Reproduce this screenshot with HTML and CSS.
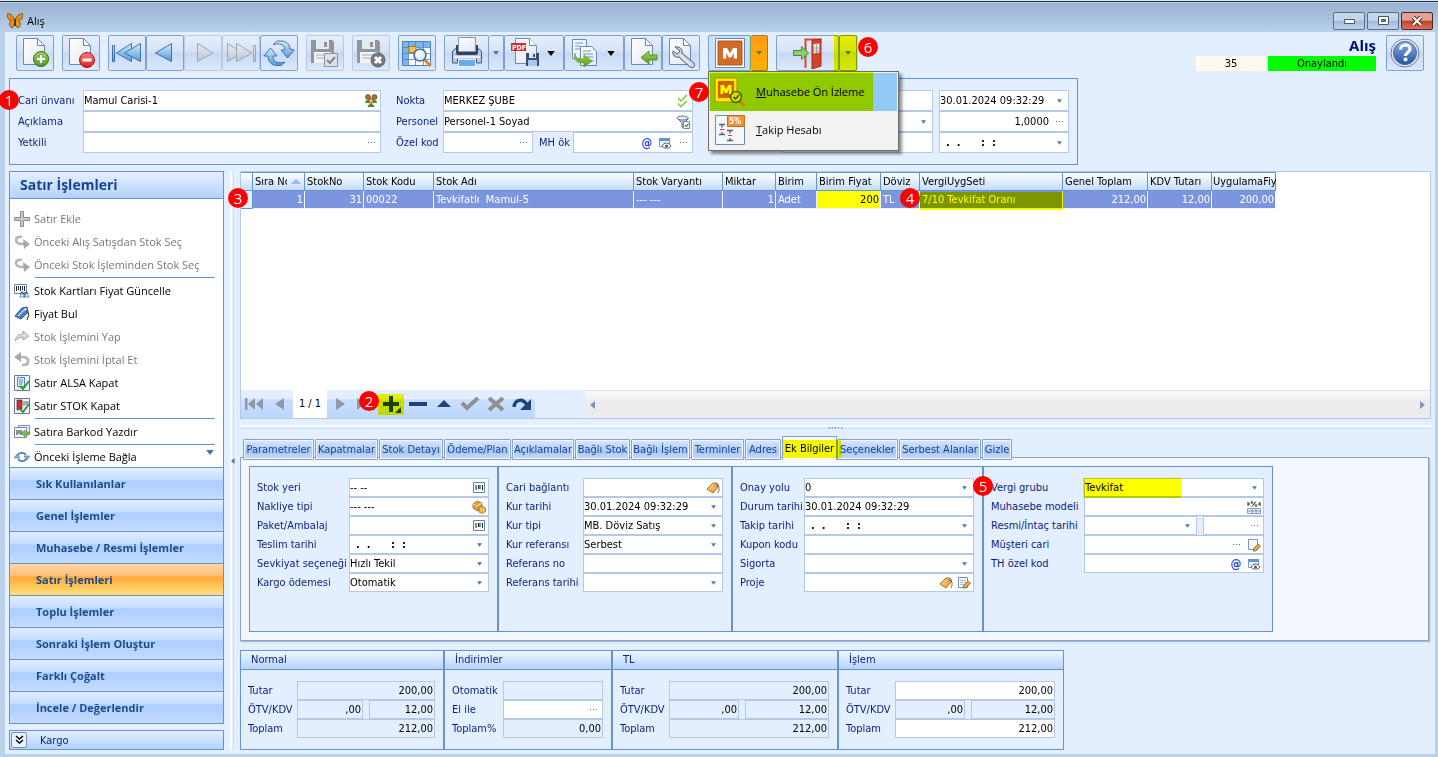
FILE: index.html
```html
<!DOCTYPE html>
<html lang="tr">
<head>
<meta charset="utf-8">
<title>Alış</title>
<link rel="stylesheet" href="styles.css">
</head>
<body>
<svg class="defs" aria-hidden="true">
  <defs>
    <linearGradient id="gBlue" x1="0" y1="0" x2="0" y2="1"><stop offset="0" stop-color="#d3ecfa"/><stop offset="1" stop-color="#4f9bd6"/></linearGradient>
    <linearGradient id="gGray" x1="0" y1="0" x2="0" y2="1"><stop offset="0" stop-color="#e8edf3"/><stop offset="1" stop-color="#bcc6d2"/></linearGradient>
    <linearGradient id="gPage" x1="0" y1="0" x2="1" y2="1"><stop offset="0" stop-color="#ffffff"/><stop offset="1" stop-color="#dfe7f3"/></linearGradient>
    <linearGradient id="gGreen" x1="0" y1="0" x2="0" y2="1"><stop offset="0" stop-color="#a6d85a"/><stop offset="1" stop-color="#4d9a1d"/></linearGradient>
    <linearGradient id="gRed" x1="0" y1="0" x2="0" y2="1"><stop offset="0" stop-color="#ff8080"/><stop offset="1" stop-color="#dd1a1a"/></linearGradient>
    <linearGradient id="gHelp" x1="0" y1="0" x2="0" y2="1"><stop offset="0" stop-color="#8eb2e6"/><stop offset="1" stop-color="#2350a0"/></linearGradient>
    <linearGradient id="gTag" x1="0" y1="0" x2="1" y2="1"><stop offset="0" stop-color="#ffe2a0"/><stop offset="1" stop-color="#e08a20"/></linearGradient>
    <symbol id="page" viewBox="0 0 32 32"><path d="M4.500 1.500h14l7 7v19h-21z" fill="url(#gPage)" stroke="#6d88b4"/><path d="M18.500 1.500v7h7z" fill="#fff" stroke="#6d88b4"/></symbol>
    <symbol id="newdoc" viewBox="0 0 32 32"><use href="#page"/><circle cx="22" cy="22" r="7.500" fill="url(#gGreen)" stroke="#2f6d12"/><path d="M20.500 17.500h3v3h3v3h-3v3h-3v-3h-3v-3h3z" fill="#fff" stroke="#3e8018" stroke-width=".5"/></symbol>
    <symbol id="deldoc" viewBox="0 0 32 32"><use href="#page"/><circle cx="22" cy="23" r="7.500" fill="url(#gRed)" stroke="#b01818"/><path d="M17.500 21.500h9v3h-9z" fill="#fff"/></symbol>
    <symbol id="first" viewBox="0 0 32 32"><g fill="url(#gBlue)" stroke="#3f6fb0"><path d="M1.500 8.500h2v16h-2z"/><path d="M20.500 6.500v18L5.500 16z"/><path d="M29.500 6.500v18L13.500 16z"/></g></symbol>
    <symbol id="prev" viewBox="0 0 32 32"><path d="M22.500 6.500v18L6.500 16z" fill="url(#gBlue)" stroke="#3f6fb0"/></symbol>
    <symbol id="next" viewBox="0 0 32 32"><path d="M10.500 6.500v18L26 16z" fill="url(#gGray)" stroke="#9aa7b8"/></symbol>
    <symbol id="last" viewBox="0 0 32 32"><g fill="url(#gGray)" stroke="#9aa7b8"><path d="M28.500 8.500h2v16h-2z"/><path d="M2.500 6.500v18L18 16z"/><path d="M11.500 6.500v18L27 16z"/></g></symbol>
    <symbol id="refresh" viewBox="0 0 32 32"><g fill="url(#gBlue)" stroke="#2f69ab" stroke-width=".9"><path d="M5 19C5 25 9 28.500 14 28.500l4 0 4-3.500c-6 1.500-12 1-12-6h4L7.500 11 .8 19z"/><path d="M27 12C27 7 23 4 18 4h-4l-4 3.500c6-1.500 12-.5 12 5.500h-4l6.500 8L31.200 13z"/></g></symbol>
    <symbol id="floppy" viewBox="0 0 32 32"><path d="M2 3h21l2 2v21H2z" fill="#8f959c"/><path d="M7 3h13v9H7z" fill="#e6e9ed"/><path d="M15 5h3v5h-3z" fill="#8f959c"/><path d="M5 15h17v11H5z" fill="#f1f3f5"/><path d="M7 18h13M7 21h13" stroke="#a9afb6"/></symbol>
    <symbol id="savecheck" viewBox="0 0 32 32"><use href="#floppy"/><path d="M15.500 16.500h13v13h-13z" fill="#dfe1e4" stroke="#8d939a"/><path d="M18 23l3 3 5-6" fill="none" stroke="#80868d" stroke-width="2"/></symbol>
    <symbol id="savex" viewBox="0 0 32 32"><use href="#floppy"/><circle cx="23" cy="23" r="7" fill="#73787e" stroke="#62676d"/><path d="M20 20l6 6m0-6l-6 6" stroke="#fff" stroke-width="3"/></symbol>
    <symbol id="tablezoom" viewBox="0 0 32 32"><path d="M1.500 4.500h28v24h-28z" fill="#fff" stroke="#4c80bb"/><path d="M2 5h27v5H2zM2 5h5v23H2z" fill="#79b7e6"/><path d="M1.500 10.500h28M1.500 16.500h28M1.500 22.500h28M7.500 4.500v24M14.500 4.500v24M22.500 4.500v24" stroke="#4c80bb" stroke-width=".8"/><path d="M8 9.500h7v6H8z" fill="#ffc04e" stroke="#b97a20"/><path d="M23.500 22.500l6 6.500" stroke="#d6862f" stroke-width="3"/><circle cx="19" cy="18" r="6" fill="#d8effd" stroke="#3f6fae" stroke-width="1.600"/><circle cx="18" cy="17" r="3" fill="#fff"/></symbol>
    <symbol id="printer" viewBox="0 0 32 32"><path d="M1.500 14l4-3h21l4 3v12h-29z" fill="#b9cbe4" stroke="#42597f"/><path d="M5 8h22v8c0 2-2 2-3 2H8c-1 0-3 0-3-2z" fill="#33435f"/><path d="M7.500.500h17v14h-17z" fill="url(#gPage)" stroke="#8096ba"/><path d="M3 19h26v2H3z" fill="#e7effa"/><path d="M6 22h20v3H6z" fill="#3c4c68"/><path d="M7.500 22.500h17v7h-17z" fill="#63aee8" stroke="#e8f2fb"/></symbol>
    <symbol id="pdf" viewBox="0 0 32 32"><path d="M7.500 1.500h14l7 7v18h-21z" fill="url(#gPage)" stroke="#6d88b4"/><path d="M21.500 1.500v7h7" fill="#fff" stroke="#6d88b4"/><path d="M3 6h15v8H3z" fill="#d22b2b"/><text x="4" y="12.500" class="pdf-word">PDF</text><path d="M18 16h13v13H18z" fill="#3b4d70"/><path d="M21 16h7v5h-7z" fill="#dbe6f5"/><path d="M25 17h2v3h-2z" fill="#3b4d70"/><path d="M20 23h9v6h-9z" fill="#a8c9ee"/></symbol>
    <symbol id="copy" viewBox="0 0 32 32"><path d="M4.500 2.500h14v19h-14z" fill="url(#gPage)" stroke="#6d88b4"/><path d="M12.500 9.500h11l5 5v14h-16z" fill="url(#gPage)" stroke="#6d88b4"/><path d="M7 6h8M7 9h5M7 12h5M15 14h8M15 17h10M15 20h10M22 24h4" stroke="#6d93cc"/><path d="M7 16c0 5 3 6 9 6v-4l8 6-8 6v-4C9 26 5 23 7 16z" fill="url(#gGreen)" stroke="#5b9a20" stroke-width=".7"/></symbol>
    <symbol id="pageleft" viewBox="0 0 32 32"><use href="#page"/><path d="M14 20.500l8-6.500v4h8v5h-8v4z" fill="url(#gGreen)" stroke="#55942c"/></symbol>
    <symbol id="pagewrench" viewBox="0 0 32 32"><use href="#page"/><path d="M10 10c4-1 8 2 7 6l12 10c2 3-1 6-4 4L14 20c-4 1-7-2-6-6l4 3 3-3z" fill="#c8d1df" stroke="#4e5e7b"/><path d="M15 18l11 10" stroke="#eef2f8" stroke-width="1.500"/></symbol>
    <symbol id="mbig" viewBox="0 0 32 32"><path d="M1.500 1.500h29v29h-29z" fill="#fff" stroke="#6f83ac"/><path d="M4 4h24v24H4z" fill="#d26a28" stroke="#b5551c"/><path d="M9 21.500V11h4l3 5.500 3-5.500h4v10.500h-3.200V16l-2.600 4.500h-2.400L12.200 16v5.500z" fill="#fff"/></symbol>
    <symbol id="door" viewBox="0 0 32 32"><path d="M13.500 31V2.500h16" fill="none" stroke="#d94b28" stroke-width="2"/><path d="M20 3l9-1v27l-9 3z" fill="#cf4526" stroke="#a43018"/><path d="M21.500 7l6-.5v9l-6 1z" fill="#e8eef4"/><path d="M24.500 7v9M21.500 11h6M21.500 14h6" stroke="#8c8f95" stroke-width=".8"/><path d="M1.500 13.500h8v-4l7 6.500-7 6.500v-4h-8z" fill="#8fcf6f" stroke="#3e8a3a"/></symbol>
    <symbol id="help" viewBox="0 0 32 32"><circle cx="16" cy="16" r="14" fill="#e4e9f2" stroke="#6d7fa8"/><circle cx="16" cy="16" r="11.500" fill="url(#gHelp)" stroke="#4468a5"/><path d="M11.500 12.500c0-6 9.500-6 9.500-.5 0 3.500-4.500 3.500-4.500 7" fill="none" stroke="#fff" stroke-width="3"/><circle cx="16.500" cy="22.500" r="2" fill="#fff"/></symbol>
    <symbol id="mzoom" viewBox="0 0 32 32"><path d="M1 2h22v24H1z" fill="#ffe86a" stroke="#a78a4a"/><path d="M4 5h16v17H4z" fill="#d0641c"/><path d="M6.500 18V9h3.200l2.300 4.500L14.300 9h3.200v9H15v-4.500L13 17h-2l-2-3.500V18z" fill="#fff"/><path d="M25 25l5.500 5" stroke="#c9802a" stroke-width="3"/><circle cx="22" cy="21" r="5.500" fill="#cfe0ec" stroke="#55606b" stroke-width="1.500"/><path d="M19.500 21l2 2 3.500-4" fill="none" stroke="#3c5058" stroke-width="1.500"/></symbol>
    <symbol id="follow" viewBox="0 0 32 32"><path d="M1.500 1.500h29v29h-29z" fill="#f4f7fc" stroke="#7189b4"/><path d="M13.500 1.500h17v11h-17z" fill="#f09236" stroke="#cc6f18"/><text x="15" y="10" class="pct-word">5%</text><path d="M5 10.500h6M5 20.500h6M8 10.500v3M8 18v2M13 16.500h6M13 26.500h6M16 16.500v3M16 24v2" stroke="#555f74" stroke-width="1.300"/><path d="M6 15.500h4M14 21.500h4" stroke="#d33"/></symbol>
    <symbol id="butterfly" viewBox="0 0 16 16"><path d="M8 7C6 2 2 0 0 1c0 4 2 6 4 7-2 2-2 5 1 7 2-1 3-4 3-6 0 2 1 5 3 6 3-2 3-5 1-7 2-1 4-3 4-7-2-1-6 1-8 6z" fill="#f0921c" stroke="#6b3a08" stroke-width=".8"/><path d="M8 6v7" stroke="#3a2208" stroke-width="1.500"/><path d="M3 4l3 4M13 4l-3 4" stroke="#a85a0c" stroke-width=".7"/></symbol>
    <symbol id="caret" viewBox="0 0 6 4"><path d="M0 0h6L3 4z" fill="currentColor"/></symbol>
    <symbol id="dots" viewBox="0 0 9 3"><path d="M1 1h1v1H1zM4 1h1v1H4zM7 1h1v1H7z" fill="#4872ac"/></symbol>
    <symbol id="people" viewBox="0 0 14 14"><circle cx="4" cy="3" r="2.500" fill="#a8703a" stroke="#5a3413" stroke-width=".6"/><circle cx="10.500" cy="3" r="2.500" fill="#a8703a" stroke="#5a3413" stroke-width=".6"/><path d="M1 9c0-4 6-4 6-1 0-3 6-3 6 1z" fill="#3d9a34"/><circle cx="7" cy="7" r="2.500" fill="#e0b070" stroke="#5a3413" stroke-width=".6"/><path d="M3.500 13c0-4 7-4 7 0z" fill="#3d9a34"/><path d="M6 10h2v2H6z" fill="#d33"/></symbol>
    <symbol id="dblcheck" viewBox="0 0 14 14"><path d="M2 4l3 3 6-6M2 9.500l3 3 6-5.500" fill="none" stroke="#9ccb5e" stroke-width="1.800"/></symbol>
    <symbol id="filtercheck" viewBox="0 0 14 14"><path d="M1 3l5 5v4l2 1V8l5-5" fill="#c3cbd6" stroke="#6b7585"/><ellipse cx="6.500" cy="3" rx="5.500" ry="2" fill="#e6eaf0" stroke="#6b7585"/><path d="M7.500 6.500h6v7h-6z" fill="#fff" stroke="#6a87b5"/><path d="M9 10l1.500 1.500L12.500 8.500" fill="none" stroke="#3c9a28" stroke-width="1.300"/></symbol>
    <symbol id="preview" viewBox="0 0 14 14"><path d="M1.500 2.500h10v8h-10z" fill="#eef4fb" stroke="#7c9cc8"/><path d="M1 2h11v3H1z" fill="#5e97cf"/><path d="M4 10c2-4 7-4 9 0-2 3-7 3-9 0z" fill="#fff" stroke="#56606e"/><circle cx="8.500" cy="10" r="1.600" fill="#56606e"/></symbol>
    <symbol id="barcode" viewBox="0 0 14 14"><path d="M1.500 1.500h11v10h-11z" fill="#fff" stroke="#5d86c0"/><path d="M4 4v5M6.500 4v4M8 4v4M10.500 4v5" stroke="#222b3c" stroke-width="1.100"/></symbol>
    <symbol id="boxes" viewBox="0 0 14 14"><path d="M1 4l4-3 5 2v6l-5 2-4-3z" fill="#dda03e" stroke="#8f5d14" stroke-width=".7"/><path d="M1 4l4 2 5-3" fill="none" stroke="#fbe0a4"/><path d="M7 8l3-2 3.500 2v3.500L10 13.500 7 12z" fill="#f0bc60" stroke="#8f5d14" stroke-width=".7"/></symbol>
    <symbol id="tag" viewBox="0 0 14 14"><path d="M1 8l6-6 4 0 2 3-6 7z" fill="url(#gTag)" stroke="#b2741f"/><circle cx="9.500" cy="4.500" r="1.200" fill="#fff" stroke="#7a4f14" stroke-width=".6"/><path d="M10 4c3 0 4 4 2 8" fill="none" stroke="#4a4540" stroke-width=".8"/></symbol>
    <symbol id="editdoc" viewBox="0 0 14 14"><path d="M1.500 1.500h9v10h-9z" fill="#f7faff" stroke="#7992bd"/><path d="M3 4.500h6M3 6.500h6M3 8.500h4" stroke="#8db0de" stroke-width=".8"/><path d="M6 12l1-3 4-4 2.500 2L9 12z" fill="#eba83f" stroke="#80521b" stroke-width=".7"/></symbol>
    <symbol id="editpage" viewBox="0 0 14 14"><path d="M1.500 1.500h9v10h-9z" fill="#f7faff" stroke="#7992bd"/><path d="M6 13l1-3 4-4 2.500 2L9 13z" fill="#eba83f" stroke="#80521b" stroke-width=".7"/></symbol>
    <symbol id="pcttable" viewBox="0 0 14 14"><path d="M1 2v4M13 2v4M1 4h2M11 4h2M5 6.500l4-5" stroke="#222" stroke-width="1"/><circle cx="5" cy="2.500" r="1" fill="none" stroke="#222" stroke-width=".8"/><circle cx="9" cy="5.500" r="1" fill="none" stroke="#222" stroke-width=".8"/><path d="M.5 8.500h13v5H.5zM.5 11h13M5 8.500v5M9 8.500v5" fill="#e7ebf6" stroke="#7f8bb5" stroke-width=".8"/></symbol>
    <symbol id="plusg" viewBox="0 0 16 16"><path d="M6.500.500h3v6h6v3h-6v6h-3v-6h-6v-3h6z" fill="#c9c9c9" stroke="#8f8f8f"/></symbol>
    <symbol id="backg" viewBox="0 0 16 16"><path d="M8 3C4 2 2 4 2 6s2 4 6 4h3" fill="none" stroke="#b5b5b5" stroke-width="2.600"/><path d="M9 5l7 5-6 5z" fill="#a9a9a9"/></symbol>
    <symbol id="fwdg" viewBox="0 0 16 16"><path d="M1 12c1-5 4-7 8-7V2l6 5-6 4V8c-3 0-5 1-8 4z" fill="#dedede" stroke="#9d9d9d" stroke-width=".9"/></symbol>
    <symbol id="undog" viewBox="0 0 16 16"><path d="M4 5h6c6 1 5 8 0 8H8" fill="none" stroke="#b5b5b5" stroke-width="2.600"/><path d="M7 0v10L0 5z" fill="#a9a9a9"/></symbol>
    <symbol id="barfind" viewBox="0 0 16 16"><path d="M.5 1.500h12v9H.5z" fill="#fff" stroke="#6d86b3"/><path d="M2.500 3v5M4.500 3v4M6.500 3v5M8.500 3v4M10.500 3v5" stroke="#1d2433"/><path d="M6 14l1-5h2l1 2 1-2h2l2 5z" fill="#5a7fbb" stroke="#3c588c" stroke-width=".7"/><circle cx="8" cy="12.500" r="1.600" fill="#cfe3fa"/><circle cx="13" cy="12.500" r="1.600" fill="#cfe3fa"/></symbol>
    <symbol id="tagblue" viewBox="0 0 16 16"><path d="M1 10l7-8 5-1 1 5-7 7z" fill="#4b84c6" stroke="#234f8f"/><path d="M4 10l6-6" stroke="#b9d6f4" stroke-width="1.500"/><circle cx="11.500" cy="3.500" r="1.200" fill="#fff"/><path d="M12 4c3 2 3 6 1 10" fill="none" stroke="#7a4a22" stroke-width="1.300"/></symbol>
    <symbol id="docok" viewBox="0 0 16 16"><path d="M.5.500h15v15H.5z" fill="#eef4fb" stroke="#6d7a93"/><path d="M3.500 2.500h7v9h-7z" fill="#dceafa" stroke="#5585c2"/><path d="M5 5h4M5 7h4M5 9h3" stroke="#5585c2"/><path d="M6 11l3 3 6-8" fill="none" stroke="#2f9e34" stroke-width="2"/></symbol>
    <symbol id="stockok" viewBox="0 0 16 16"><path d="M.5.500h15v15H.5z" fill="#eef4fb" stroke="#6d7a93"/><path d="M3 2h5v9l-5 1z" fill="#c23434" stroke="#7d1717" stroke-width=".7"/><path d="M10 3v5M12 3v4M14 3v3" stroke="#5a6785" stroke-width="1"/><path d="M6 11l3 3 6-8" fill="none" stroke="#2f9e34" stroke-width="2"/></symbol>
    <symbol id="barprint" viewBox="0 0 16 16"><path d="M4.500 1.500h11v9h-11z" fill="#e3ecf8" stroke="#7a93be"/><path d="M.5 3.500h12v10H.5z" fill="#fff" stroke="#6d86b3"/><path d="M3 6v5M5 6v4M7 6v5" stroke="#1d2433"/><path d="M7 9l4-3v2h4v3h-4v2z" fill="#7fbf42" stroke="#4d8a24" stroke-width=".6"/></symbol>
    <symbol id="sync" viewBox="0 0 16 16"><g fill="none" stroke="#5a86ad" stroke-width="2"><path d="M3 9c0-5 6-7 9-3"/><path d="M13 7c0 5-6 7-9 3"/></g><path d="M0 9h6L3 5zM10 7h6l-3 4z" fill="#7fb2da" stroke="#4b7aa5" stroke-width=".6"/></symbol>
    <symbol id="nfirst" viewBox="0 0 20 20"><path d="M1 4h2.500v12H1zM11 4v12l-7-6zM19 4v12l-7-6z" fill="#8e98a6"/></symbol>
    <symbol id="nprev" viewBox="0 0 20 20"><path d="M14 4v12l-9-6z" fill="#8e98a6"/></symbol>
    <symbol id="nnext" viewBox="0 0 20 20"><path d="M6 4v12l9-6z" fill="#8e98a6"/></symbol>
    <symbol id="nlast" viewBox="0 0 20 20"><path d="M16 4h3v12h-3zM1 4v12l7-6zM8 4v12l7-6z" fill="#8e98a6"/></symbol>
    <symbol id="nplus" viewBox="0 0 20 20"><path d="M7 2h4v6h6v4h-6v6H7v-6H1V8h6z" fill="#1c4280"/><path d="M19 13v6h-6z" fill="#1c4280"/></symbol>
    <symbol id="nminus" viewBox="0 0 20 20"><path d="M1 8h18v4H1z" fill="#1c4280"/></symbol>
    <symbol id="nup" viewBox="0 0 20 20"><path d="M3 13l7-7 7 7z" fill="#1c4280"/></symbol>
    <symbol id="ncheck" viewBox="0 0 20 20"><path d="M2 9l5 5L18 4" fill="none" stroke="#909090" stroke-width="4"/></symbol>
    <symbol id="nx" viewBox="0 0 20 20"><path d="M3 4l14 12M17 4L3 16" stroke="#909090" stroke-width="4"/></symbol>
    <symbol id="nredo" viewBox="0 0 20 20"><path d="M2 13C3 5 11 4 15 11" fill="none" stroke="#1c4280" stroke-width="3.500"/><path d="M19 5v11H8z" fill="#1c4280"/></symbol>
  </defs>
</svg>

<div class="window">
  <header class="titlebar">
    <svg class="i16"><use href="#butterfly"/></svg>
    <h1 class="title">Alış</h1>
    <div class="winbtns">
      <button class="winbtn" aria-label="Küçült"><svg width="11" height="10"><path d="M.5 3.500h10v4H.5z" fill="#fff" stroke="#4b5462"/></svg></button>
      <button class="winbtn" aria-label="Büyüt"><svg width="11" height="10"><path d="M.5.500h10v8H.5z" fill="#fff" stroke="#4b5462"/><path d="M3.500 3.500h4v2h-4z" fill="#7c95b0" stroke="#4b5462"/></svg></button>
      <button class="winbtn close" aria-label="Kapat"><svg width="12" height="10"><path d="M2 1l8 8M10 1L2 9" stroke="#5b2320" stroke-width="4"/><path d="M2 1l8 8M10 1L2 9" stroke="#fff" stroke-width="2"/></svg></button>
    </div>
  </header>

  <div class="content">
    <div class="toolbar">
      <button class="tb" aria-label="Yeni"><svg><use href="#newdoc"/></svg></button>
      <button class="tb" aria-label="Sil"><svg><use href="#deldoc"/></svg></button>
      <div class="tbgroup">
        <button class="tb" aria-label="İlk"><svg><use href="#first"/></svg></button>
        <button class="tb" aria-label="Önceki"><svg><use href="#prev"/></svg></button>
        <button class="tb off" aria-label="Sonraki"><svg><use href="#next"/></svg></button>
        <button class="tb off" aria-label="Son"><svg><use href="#last"/></svg></button>
        <button class="tb" aria-label="Yenile"><svg><use href="#refresh"/></svg></button>
      </div>
      <button class="tb off" aria-label="Kaydet"><svg><use href="#savecheck"/></svg></button>
      <button class="tb off" aria-label="Vazgeç"><svg><use href="#savex"/></svg></button>
      <button class="tb" aria-label="Liste"><svg><use href="#tablezoom"/></svg></button>
      <div class="tbgroup">
        <button class="tb wide-print" aria-label="Yazdır"><svg><use href="#printer"/></svg></button>
        <button class="tb split blue" aria-label="Yazdır seçenekleri"><svg><use href="#caret"/></svg></button>
        <button class="tb drop" aria-label="PDF kaydet"><svg><use href="#pdf"/></svg><svg class="caret"><use href="#caret"/></svg></button>
        <button class="tb drop" aria-label="Kopyala"><svg><use href="#copy"/></svg><svg class="caret"><use href="#caret"/></svg></button>
        <button class="tb" aria-label="İçeri al"><svg><use href="#pageleft"/></svg></button>
        <button class="tb" aria-label="Ayarlar"><svg><use href="#pagewrench"/></svg></button>
      </div>
      <div class="tbgroup anchor">
        <button class="tb wide-m" aria-label="Muhasebe"><svg><use href="#mbig"/></svg></button>
        <button class="tb split hot" aria-label="Muhasebe menüsü"><svg><use href="#caret"/></svg></button>
        <span class="hl hl-m"></span>
        <div class="menu" role="menu">
          <button class="mitem sel" role="menuitem"><svg><use href="#mzoom"/></svg><span><u>M</u>uhasebe Ön İzleme</span></button>
          <button class="mitem" role="menuitem"><svg><use href="#follow"/></svg><span><u>T</u>akip Hesabı</span></button>
          <span class="hl hl-menu"></span>
          <span class="mark mark7">7</span>
        </div>
      </div>
      <div class="tbgroup anchor">
        <button class="tb wide-door" aria-label="Çıkış"><svg><use href="#door"/></svg></button>
        <button class="tb split blue wider" aria-label="Çıkış seçenekleri"><svg><use href="#caret"/></svg></button>
        <span class="hl hl-door"></span>
        <span class="mark mark6">6</span>
      </div>
      <div class="status">
        <strong class="doctype">Alış</strong>
        <div class="chips"><span class="chip num">35</span><span class="chip ok">Onaylandı</span></div>
      </div>
      <button class="tb help" aria-label="Yardım"><svg><use href="#help"/></svg></button>
    </div>

    <section class="head anchor">
      <span class="mark mark1">1</span>
      <div class="hcol h1">
        <label for="cari">Cari ünvanı</label><span class="box"><input id="cari" value="Mamul Carisi-1"><button class="ic" aria-label="Cari seç"><svg class="i14"><use href="#people"/></svg></button></span>
        <label for="acik">Açıklama</label><span class="box"><input id="acik"></span>
        <label for="yetk">Yetkili</label><span class="box"><input id="yetk"><button class="ic" aria-label="Yetkili seç"><svg class="dots"><use href="#dots"/></svg></button></span>
      </div>
      <div class="hcol h2">
        <label for="nokta">Nokta</label><span class="box"><input id="nokta" value="MERKEZ ŞUBE"><button class="ic" aria-label="Nokta seç"><svg class="i14"><use href="#dblcheck"/></svg></button></span>
        <label for="pers">Personel</label><span class="box"><input id="pers" value="Personel-1 Soyad"><button class="ic" aria-label="Personel seç"><svg class="i14"><use href="#filtercheck"/></svg></button></span>
        <label for="ozel">Özel kod</label>
        <div class="pair"><span class="box grow3"><input id="ozel"><button class="ic" aria-label="Özel kod seç"><svg class="dots"><use href="#dots"/></svg></button></span>
          <label for="mhok" class="mid">MH ök</label><span class="box grow4"><input id="mhok"><button class="ic at" aria-label="E-posta">@</button><button class="ic" aria-label="Ön izle"><svg class="i14"><use href="#preview"/></svg></button><button class="ic" aria-label="MH ök seç"><svg class="dots"><use href="#dots"/></svg></button></span></div>
      </div>
      <div class="hcol h3">
        <span class="box"><input aria-label="Belge"></span>
        <span class="box"><select aria-label="Döviz"><option></option></select><svg class="dd"><use href="#caret"/></svg></span>
        <span class="box"><input aria-label="Belge no"></span>
      </div>
      <div class="hcol h4">
        <span class="box"><input aria-label="Tarih" value="30.01.2024 09:32:29"><button class="ic" aria-label="Takvim"><svg class="dd"><use href="#caret"/></svg></button></span>
        <span class="box"><input class="num" aria-label="Kur" value="1,0000"><button class="ic" aria-label="Kur seç"><svg class="dots"><use href="#dots"/></svg></button></span>
        <span class="box"><input class="blankdate" aria-label="Vade" value=".  .      :  :"><button class="ic" aria-label="Takvim"><svg class="dd"><use href="#caret"/></svg></button></span>
      </div>
    </section>

    <div class="work">
      <aside class="side">
        <div class="sidebox">
          <h2 class="sidehead">Satır İşlemleri</h2>
          <div class="acts">
            <button class="act" disabled><svg class="i16"><use href="#plusg"/></svg>Satır Ekle</button>
            <button class="act" disabled><svg class="i16"><use href="#backg"/></svg>Önceki Alış Satışdan Stok Seç</button>
            <button class="act" disabled><svg class="i16"><use href="#backg"/></svg>Önceki Stok İşleminden Stok Seç</button>
            <hr>
            <button class="act"><svg class="i16"><use href="#barfind"/></svg>Stok Kartları Fiyat Güncelle</button>
            <button class="act"><svg class="i16"><use href="#tagblue"/></svg>Fiyat Bul</button>
            <button class="act" disabled><svg class="i16"><use href="#fwdg"/></svg>Stok İşlemini Yap</button>
            <button class="act" disabled><svg class="i16"><use href="#undog"/></svg>Stok İşlemini İptal Et</button>
            <button class="act"><svg class="i16"><use href="#docok"/></svg>Satır ALSA Kapat</button>
            <button class="act"><svg class="i16"><use href="#stockok"/></svg>Satır STOK Kapat</button>
            <hr>
            <button class="act"><svg class="i16"><use href="#barprint"/></svg>Satıra Barkod Yazdır</button>
            <hr>
            <button class="act"><svg class="i16"><use href="#sync"/></svg>Önceki İşleme Bağla<svg class="more"><use href="#caret"/></svg></button>
          </div>
          <nav class="groups">
            <button class="grp">Sık Kullanılanlar</button>
            <button class="grp">Genel İşlemler</button>
            <button class="grp">Muhasebe / Resmi İşlemler</button>
            <button class="grp on">Satır İşlemleri</button>
            <button class="grp">Toplu İşlemler</button>
            <button class="grp">Sonraki İşlem Oluştur</button>
            <button class="grp">Farklı Çoğalt</button>
            <button class="grp">İncele / Değerlendir</button>
          </nav>
        </div>
        <div class="cargo"><button class="expand" aria-label="Kargo aç"><svg width="9" height="10"><path d="M1 1l3.500 3L8 1M1 5l3.500 3L8 5" fill="none" stroke="#000" stroke-width="1.400"/></svg></button><span>Kargo</span></div>
      </aside>
      <div class="vsplit"><svg width="4" height="6"><path d="M3.500 0v6L0 3z" fill="#4872ac"/></svg></div>

      <main class="main">
        <section class="gridbox anchor">
          <table class="grid">
            <colgroup><col class="c0"><col class="c1"><col class="c2"><col class="c3"><col class="c4"><col class="c5"><col class="c6"><col class="c7"><col class="c8"><col class="c9"><col class="c10"><col class="c11"><col class="c12"><col class="c12"></colgroup>
            <thead><tr><th></th><th><span class="sorted"><span class="clip">Sıra No</span><svg width="10" height="5"><path d="M0 5h10L5 0z" fill="#8fbdf0"/></svg></span></th><th>StokNo</th><th>Stok Kodu</th><th>Stok Adı</th><th>Stok Varyantı</th><th>Miktar</th><th>Birim</th><th>Birim Fiyat</th><th>Döviz</th><th>VergiUygSeti</th><th>Genel Toplam</th><th>KDV Tutarı</th><th>UygulamaFiy</th></tr></thead>
            <tbody><tr><td class="ind"></td><td class="r">1</td><td class="r">31</td><td>00022</td><td>Tevkifatlı&nbsp; Mamul-5</td><td>--- ---</td><td class="r">1</td><td>Adet</td><td class="r price">200</td><td>TL</td><td>7/10 Tevkifat Oranı</td><td class="r">212,00</td><td class="r">12,00</td><td class="r">200,00</td></tr></tbody>
          </table>
          <span class="hl hl-tax"></span>
          <span class="mark mark3">3</span>
          <span class="mark mark4">4</span>
          <div class="navrow">
            <div class="nav anchor">
              <button class="nb" aria-label="İlk kayıt"><svg><use href="#nfirst"/></svg></button>
              <button class="nb" aria-label="Önceki kayıt"><svg><use href="#nprev"/></svg></button>
              <span class="pos">1 / 1</span>
              <button class="nb" aria-label="Sonraki kayıt"><svg><use href="#nnext"/></svg></button>
              <button class="nb" aria-label="Son kayıt"><svg><use href="#nlast"/></svg></button>
              <button class="nb" aria-label="Ekle"><svg><use href="#nplus"/></svg></button>
              <button class="nb" aria-label="Çıkar"><svg><use href="#nminus"/></svg></button>
              <button class="nb" aria-label="Düzenle"><svg><use href="#nup"/></svg></button>
              <button class="nb" aria-label="Onayla"><svg><use href="#ncheck"/></svg></button>
              <button class="nb" aria-label="İptal"><svg><use href="#nx"/></svg></button>
              <button class="nb" aria-label="Tazele"><svg><use href="#nredo"/></svg></button>
              <span class="hl hl-plus"></span>
              <span class="mark mark2">2</span>
            </div>
            <div class="hscroll"><svg width="5" height="8"><path d="M5 0v8L0 4z" fill="#7d93c0"/></svg><svg width="5" height="8"><path d="M0 0v8l5-4z" fill="#7d93c0"/></svg></div>
          </div>
        </section>

        <div class="hsplit"><span>·····</span></div>

        <div class="tabs anchor" role="tablist">
          <button class="tab" role="tab">Parametreler</button><button class="tab" role="tab">Kapatmalar</button><button class="tab" role="tab">Stok Detayı</button><button class="tab" role="tab">Ödeme/Plan</button><button class="tab" role="tab">Açıklamalar</button><button class="tab" role="tab">Bağlı Stok</button><button class="tab" role="tab">Bağlı İşlem</button><button class="tab" role="tab">Terminler</button><button class="tab" role="tab">Adres</button><button class="tab cur" role="tab" aria-selected="true">Ek Bilgiler<span class="hl hl-tab"></span></button><button class="tab" role="tab">Seçenekler</button><button class="tab" role="tab">Serbest Alanlar</button><button class="tab" role="tab">Gizle</button>
        </div>

        <section class="panel">
          <div class="cards">
            <div class="card k1">
              <label for="f1">Stok yeri</label><span class="box"><input id="f1" value="-- --"><button class="ic" aria-label="Stok yeri seç"><svg class="i14"><use href="#barcode"/></svg></button></span>
              <label for="f2">Nakliye tipi</label><span class="box"><input id="f2" value="--- ---"><button class="ic" aria-label="Nakliye seç"><svg class="i14"><use href="#boxes"/></svg></button></span>
              <label for="f3">Paket/Ambalaj</label><span class="box"><input id="f3"><button class="ic" aria-label="Paket seç"><svg class="i14"><use href="#barcode"/></svg></button></span>
              <label for="f4">Teslim tarihi</label><span class="box"><input id="f4" class="blankdate" value=".  .      :  :"><button class="ic" aria-label="Takvim"><svg class="dd"><use href="#caret"/></svg></button></span>
              <label for="f5">Sevkiyat seçeneği</label><span class="box"><select id="f5"><option>Hızlı Tekil</option></select><svg class="dd"><use href="#caret"/></svg></span>
              <label for="f6">Kargo ödemesi</label><span class="box"><select id="f6"><option>Otomatik</option></select><svg class="dd"><use href="#caret"/></svg></span>
            </div>
            <div class="card k2">
              <label for="g1">Cari bağlantı</label><span class="box"><input id="g1"><button class="ic" aria-label="Bağlantı seç"><svg class="i14"><use href="#tag"/></svg></button></span>
              <label for="g2">Kur tarihi</label><span class="box"><input id="g2" value="30.01.2024 09:32:29"><button class="ic" aria-label="Takvim"><svg class="dd"><use href="#caret"/></svg></button></span>
              <label for="g3">Kur tipi</label><span class="box"><select id="g3"><option>MB. Döviz Satış</option></select><svg class="dd"><use href="#caret"/></svg></span>
              <label for="g4">Kur referansı</label><span class="box"><select id="g4"><option>Serbest</option></select><svg class="dd"><use href="#caret"/></svg></span>
              <label for="g5">Referans no</label><span class="box"><input id="g5"></span>
              <label for="g6">Referans tarihi</label><span class="box"><input id="g6"><button class="ic" aria-label="Takvim"><svg class="dd"><use href="#caret"/></svg></button></span>
            </div>
            <div class="card k3">
              <label for="o1">Onay yolu</label><span class="box"><select id="o1"><option>0</option></select><svg class="dd"><use href="#caret"/></svg></span>
              <label for="o2">Durum tarihi</label><span class="box"><input id="o2" value="30.01.2024 09:32:29"></span>
              <label for="o3">Takip tarihi</label><span class="box"><input id="o3" class="blankdate" value=".  .      :  :"><button class="ic" aria-label="Takvim"><svg class="dd"><use href="#caret"/></svg></button></span>
              <label for="o4">Kupon kodu</label><span class="box"><input id="o4"></span>
              <label for="o5">Sigorta</label><span class="box"><select id="o5"><option></option></select><svg class="dd"><use href="#caret"/></svg></span>
              <label for="o6">Proje</label><span class="box"><input id="o6"><button class="ic" aria-label="Proje seç"><svg class="i14"><use href="#tag"/></svg></button><button class="ic" aria-label="Proje düzenle"><svg class="i14"><use href="#editdoc"/></svg></button></span>
            </div>
            <div class="card k4 anchor">
              <span class="mark mark5">5</span>
              <label for="v1">Vergi grubu</label><span class="box anchor"><select id="v1"><option>Tevkifat</option></select><svg class="dd"><use href="#caret"/></svg><span class="hl hl-tev"></span></span>
              <label for="v2">Muhasebe modeli</label><span class="box"><input id="v2"><button class="ic" aria-label="Model seç"><svg class="i14"><use href="#pcttable"/></svg></button></span>
              <label for="v3">Resmi/İntaç tarihi</label><div class="pair"><span class="box fill"><input id="v3"><button class="ic" aria-label="Takvim"><svg class="dd"><use href="#caret"/></svg></button></span><span class="box w61"><input aria-label="İntaç tarihi"><button class="ic" aria-label="İntaç seç"><svg class="dots"><use href="#dots"/></svg></button></span></div>
              <label for="v4">Müşteri cari</label><span class="box"><input id="v4"><button class="ic" aria-label="Cari seç"><svg class="dots"><use href="#dots"/></svg></button><button class="ic" aria-label="Cari düzenle"><svg class="i14"><use href="#editpage"/></svg></button></span>
              <label for="v5">TH özel kod</label><span class="box"><input id="v5"><button class="ic at" aria-label="E-posta">@</button><button class="ic" aria-label="Ön izle"><svg class="i14"><use href="#preview"/></svg></button></span>
            </div>
          </div>
        </section>

        <section class="totals">
          <div class="tot t1"><h3>Normal</h3><div class="trows">
            <label for="n1">Tutar</label><span class="box ro"><input id="n1" class="num" readonly value="200,00"></span>
            <label for="n2">ÖTV/KDV</label><div class="pair"><span class="box ro fill"><input id="n2" class="num" readonly value=",00"></span><span class="box ro fill"><input class="num" aria-label="KDV" readonly value="12,00"></span></div>
            <label for="n3">Toplam</label><span class="box ro"><input id="n3" class="num" readonly value="212,00"></span></div></div>
          <div class="tot t2"><h3>İndirimler</h3><div class="trows">
            <label for="d1">Otomatik</label><span class="box ro"><input id="d1" readonly></span>
            <label for="d2">El ile</label><span class="box"><input id="d2"><button class="ic" aria-label="İndirim seç"><svg class="dots"><use href="#dots"/></svg></button></span>
            <label for="d3">Toplam%</label><span class="box ro"><input id="d3" class="num" readonly value="0,00"></span></div></div>
          <div class="tot t3"><h3>TL</h3><div class="trows">
            <label for="t1">Tutar</label><span class="box ro"><input id="t1" class="num" readonly value="200,00"></span>
            <label for="t2">ÖTV/KDV</label><div class="pair"><span class="box ro w70"><input id="t2" class="num" readonly value=",00"></span><span class="box ro fill"><input class="num" aria-label="KDV" readonly value="12,00"></span></div>
            <label for="t3">Toplam</label><span class="box ro"><input id="t3" class="num" readonly value="212,00"></span></div></div>
          <div class="tot t3"><h3>İşlem</h3><div class="trows">
            <label for="s1">Tutar</label><span class="box"><input id="s1" class="num" value="200,00"></span>
            <label for="s2">ÖTV/KDV</label><div class="pair"><span class="box ro w70"><input id="s2" class="num" readonly value=",00"></span><span class="box ro fill"><input class="num" aria-label="KDV" readonly value="12,00"></span></div>
            <label for="s3">Toplam</label><span class="box"><input id="s3" class="num" value="212,00"></span></div></div>
        </section>
      </main>
    </div>
  </div>
</div>
</body>
</html>
```

FILE: styles.css
```css
:root {
  --line: #6593cf;
  --field: #b5c9e6;
  --bg: #e3eeff;
  --ink: #0b1f7a;
  --ui: "DejaVu Sans Condensed", "Noto Sans", sans-serif;
  --segoe: "Open Sans", "Noto Sans", sans-serif;
}
* { box-sizing: border-box; }
body { margin: 0; border-top: 1px solid #d3e9ef; font: 11px/15px var(--ui); color: var(--ink); background: #b9d1ea; }
button, input, select { font: inherit; color: inherit; margin: 0; padding: 0; border: 0; background: none; border-radius: 0; }
.defs { position: absolute; width: 0; height: 0; }
.pdf-word { font: bold 7px var(--ui); fill: #fff; }
.pct-word { font: bold 8px var(--ui); fill: #fff; }
.i16 { width: 16px; height: 16px; flex: none; }
.i14 { width: 14px; height: 14px; }
.dots { width: 9px; height: 3px; }
.anchor { position: relative; }

.window { min-height: calc(100vh - 1px); display: flex; flex-direction: column; border-top: 1px solid #1f3038; padding: 1px 3px 3px 5px; }
.titlebar { display: flex; align-items: center; height: 29px; margin: 0 -3px 0 -5px; padding: 6px 5px 0 7px; gap: 4px; background: linear-gradient(#98b2cf, #b9d1ea); }
.title { flex: 1; margin: 0; font: 11px/16px var(--segoe); color: #000; }
.winbtns { display: flex; gap: 2px; }
.winbtn { display: grid; place-items: center; width: 32px; height: 18px; border: 1px solid #566f8f; border-radius: 2px; background: linear-gradient(#c5d7ec 45%, #a3bbd8 50%, #bdd2ea); }
.winbtn.close { border-color: #5a2028; background: linear-gradient(#e0a294 45%, #bf4228 50%, #d8705a); }

.content { flex: 1; display: flex; flex-direction: column; background: var(--bg); padding: 3px 4px 4px 4px; }
.toolbar { display: flex; gap: 8px; padding-left: 7px; padding-right: 7px; }
.tbgroup { display: flex; }
.tb { display: flex; align-items: center; justify-content: center; width: 38px; height: 36px; border: 1px solid #7f9fcf; border-radius: 2px; background: linear-gradient(#e6eefb, #d5e3f7 45%, #c6d9f3 50%, #dbe9fb); }
.tb svg { width: 32px; height: 32px; flex: none; }
.tb.off { border-color: #b9c9e2; }
.tb.wide-print { width: 45px; }
.tb.split { width: 15px; color: #4d7ab5; border-left: 0; }
.tb.split svg { width: 6px; height: 4px; }
.tb.wider { width: 18px; border-left: 1px solid #7f9fcf; }
.tb.drop { width: 60px; justify-content: space-between; padding: 0 8px 0 3px; color: #000; }
.tb.drop .caret { width: 8px; height: 5px; }
.tb.wide-m { width: 43px; background: #c9e2fb; }
.tb.hot { width: 17px; background: linear-gradient(#ff9a2e, #ffb000); color: #53812c; border-color: #a07a4a; }
.tb.wide-door { width: 63px; }
.status { margin-left: auto; text-align: right; }
.doctype { display: block; font: bold 15px/21px var(--segoe); color: #00106e; }
.chips { display: flex; gap: 2px; }
.chip { height: 15px; text-align: center; color: #000; }
.chip.num { width: 70px; background: #fffaf0; }
.chip.ok { width: 108px; background: #0f0; }
.help { margin-left: 2px; }

.menu { position: absolute; z-index: 5; left: 0; top: 36px; width: 191px; padding: 1px; border: 1px solid #6d6d6d; background: #f2f2f2; box-shadow: 3px 3px 3px rgba(0,0,0,.45); color: #000; font: 11px/16px var(--segoe); }
.mitem { display: flex; align-items: center; gap: 10px; width: 100%; height: 38px; padding-left: 4px; }
.mitem svg { width: 32px; height: 32px; }
.mitem.sel { background: #91c9f7; }

.hl { position: absolute; background: #ff0; mix-blend-mode: multiply; pointer-events: none; }
.hl-m { left: 41px; top: 1px; width: 19px; height: 35px; opacity: .5; }
.hl-menu { left: 0; top: 0; width: 164px; height: 39px; }
.hl-door { left: 58px; top: 0; width: 24px; height: 36px; }
.hl-tax { left: 679px; top: 20px; width: 143px; height: 18px; }
.hl-plus { left: 137px; top: 4px; width: 26px; height: 21px; }
.hl-tab { left: 0; top: 3px; width: 58px; height: 18px; }
.hl-tev { left: -2px; top: -1px; width: 98px; height: 20px; }
.mark { position: absolute; z-index: 6; width: 20px; height: 20px; border-radius: 50%; background: #f00; color: #fff; font: 15px/20px var(--segoe); text-align: center; }
.mark1 { left: -11px; top: 11px; }
.mark2 { left: 118px; top: 1px; }
.mark3 { left: -13px; top: 16px; }
.mark4 { left: 659px; top: 16px; }
.mark5 { left: -11px; top: 9px; }
.mark6 { left: 82px; top: 2px; }
.mark7 { left: -20px; top: 10px; }

.head { display: flex; align-self: flex-start; margin-top: 7px; padding: 11px 8px 11px 8px; border: 1px solid var(--line); }
.hcol { display: grid; grid-auto-rows: 21px; align-items: center; }
.h1 { grid-template-columns: 65px 298px; margin-right: 15px; }
.h2 { grid-template-columns: 47px 250px; margin-right: 90px; }
.h3 { grid-template-columns: 150px; margin-right: 6px; }
.h4 { grid-template-columns: 130px; }
label { white-space: nowrap; }
.box { display: flex; align-items: center; align-self: stretch; min-width: 0; border: 1px solid var(--field); background: #fff; color: #000; }
.box.ro { background: var(--bg); }
.box input, .box select { flex: 1; min-width: 0; width: 0; height: 100%; padding-left: 0; outline: 0; appearance: none; }
.box .num { text-align: right; padding-right: 1px; }
.box .blankdate { padding-left: 6px; white-space: pre; font-weight: bold; }
.ic { display: grid; place-items: center; min-width: 18px; height: 100%; }
.at { color: #2a44e0; font: bold 12px/14px var(--ui); }
.dd { width: 5px; height: 4px; color: #4d7ab5; margin: 0 6px; flex: none; }
.pair { display: flex; align-self: stretch; align-items: center; gap: 6px; }
.grow3 { width: 90px; }
.grow4 { flex: 1; }
.mid { width: 28px; }
.fill { flex: 1; }
.w61 { width: 61px; }
.w70 { width: 70px; }

.work { flex: 1; display: flex; margin-top: 6px; }
.side { width: 215px; display: flex; flex-direction: column; gap: 6px; }
.sidebox { flex: 1; display: flex; flex-direction: column; border: 1px solid var(--line); background: #fff; }
.sidehead { margin: 0; padding-left: 10px; font: bold 14px/26px var(--segoe); color: #1b4190; border-bottom: 1px solid var(--line); background: linear-gradient(#e6f0ff, #b2d2ff); }
.acts { flex: 1; display: flex; flex-direction: column; padding-top: 8px; }
.act { display: flex; align-items: center; gap: 4px; height: 23px; min-height: 0; padding: 0 9px 0 4px; font: 11px/16px var(--segoe); color: #000; white-space: nowrap; }
.act:disabled { color: #787878; }
.more { width: 8px; height: 5px; margin: -8px 0 0 auto; color: #3a74b8; }
.acts hr { width: 180px; height: 1px; margin: 1px 0 1px 25px; border: 0; background: var(--line); }
.act:last-child { height: 21px; }
.grp { display: block; width: 100%; height: 32px; padding-left: 26px; border-top: 1px solid var(--line); text-align: left; font: bold 11px/16px var(--segoe); color: #1d4c8c; background: linear-gradient(#e3efff, #c4dcff 38%, #acceff 42%, #c3dbff); }
.grp.on { background: linear-gradient(#ffd7a6, #ffbf74 38%, #ffa938 42%, #ffdf7a); }
.cargo { display: flex; align-items: center; gap: 13px; height: 20px; padding-left: 1px; border: 1px solid var(--line); background: linear-gradient(#e3efff, #b2d2ff); }
.expand { display: grid; place-items: center; width: 16px; height: 16px; border: 1px solid #6f8fbf; border-radius: 2px; background: #e9f2ff; }
.vsplit { display: grid; align-items: center; width: 16px; padding-left: 7px; background: linear-gradient(90deg, transparent 6px, #f8fbff 6px 8px, transparent 8px 9px, #cde0fb 9px 10px, transparent 10px); }

.main { flex: 1; min-width: 0; display: flex; flex-direction: column; }
.gridbox { flex: 1; display: flex; flex-direction: column; border: 1px solid var(--field); background: #fff; }
.grid { table-layout: fixed; width: 1035px; border-collapse: separate; border-spacing: 0; color: #000; }
.grid th { height: 19px; padding: 0 0 0 2px; font-weight: normal; text-align: left; white-space: nowrap; border: solid var(--line); border-width: 1px 1px 1px 0; background: linear-gradient(#fff, #c3dcfb); }
.grid td { height: 18px; padding: 0 2px; white-space: nowrap; color: #fff; background: #7b96df; border: solid #eef3ff; border-width: 0 1px 1px 0; }
.grid th:last-child { padding-left: 1px; }
.grid td.ind { background: #e3eeff; border-color: var(--line); }
.grid td.price { background: #ff0; color: #000; }
.grid .r { text-align: right; padding-right: 1px; }
.sorted { display: flex; align-items: center; gap: 4px; }
.clip { width: 32px; overflow: hidden; }
.c0 { width: 12px; } .c1 { width: 52px; } .c2 { width: 59px; } .c3 { width: 70px; } .c4 { width: 200px; } .c5 { width: 89px; } .c6 { width: 53px; } .c7 { width: 41px; } .c8 { width: 64px; } .c9 { width: 39px; } .c10 { width: 143px; } .c11 { width: 85px; } .c12 { width: 64px; }
.navrow { display: flex; height: 28px; margin-top: auto; background: var(--bg); }
.nav { display: flex; margin-right: 50px; background: linear-gradient(#e3efff 30%, #c9dfff 35%, #bcd7fd); }
.nb { display: grid; place-items: center; width: 26px; }
.nb svg { width: 20px; height: 20px; }
.pos { width: 34px; background: #fff; color: #000; text-align: center; line-height: 28px; }
.hscroll { flex: 1; display: flex; align-items: center; justify-content: space-between; padding: 0 5px; border-top: 1px solid #e3e3e3; background: linear-gradient(#fafafa, #ececec 40%); }
.hsplit { height: 17px; padding-top: 5px; text-align: center; line-height: 7px; color: #4872ac; background: linear-gradient(transparent 6px, #f8fbff 6px 8px, transparent 8px 9px, #cde0fb 9px 10px, transparent 10px); }
.tabs { display: grid; grid-template-columns: 72px 64px 65px 68px 63px 56px 60px 54px 37px 55px 62px 83px 31px; align-items: end; height: 22px; padding-left: 3px; margin-bottom: -1px; z-index: 1; }
.tab { height: 21px; margin-right: 1px; white-space: nowrap; color: #17439a; border: 1px solid #8ba2c8; border-radius: 1px 1px 0 0; box-shadow: inset 0 0 0 1px #eef4ff; background: linear-gradient(#dce8f8, #a9c9f2 60%, #c8dbf3); }
.tab.cur { position: relative; height: 24px; margin-right: 0; color: #000; border-bottom: 0; box-shadow: none; background: #f3f8ff; }
.panel { margin-right: 2px; padding: 8px 8px; border: 1px solid #8ba2c8; background: #f3f8ff; box-shadow: 1px 1px 1px #a8bad8; }
.cards { display: flex; width: max-content; border: 1px solid var(--line); }
.card { display: grid; grid-auto-rows: 19px; align-content: start; align-items: center; min-height: 164px; padding: 11px 8px 0 7px; background: var(--bg); border-right: 2px solid var(--line); }
.card:last-child { border-right: 0; }
.k1 { grid-template-columns: 92px 140px; }
.k2 { grid-template-columns: 77px 140px; }
.k3 { grid-template-columns: 64px 170px; }
.k4 { grid-template-columns: 93px 180px; }
.totals { display: flex; width: max-content; margin-top: 9px; border: 1px solid var(--line); }
.tot { border-right: 2px solid var(--line); }
.tot:last-child { border-right: 0; }
.tot h3 { margin: 0; padding-left: 10px; font: 11px/18px var(--ui); border-bottom: 1px solid var(--line); background: linear-gradient(#f0f6ff, #b5d4ff); }
.trows { display: grid; grid-auto-rows: 19px; align-items: center; padding: 11px 8px 11px 7px; }
.t1 .trows { grid-template-columns: 49px 138px; }
.t2 .trows { grid-template-columns: 51px 100px; }
.t3 .trows { grid-template-columns: 49px 160px; }
```
